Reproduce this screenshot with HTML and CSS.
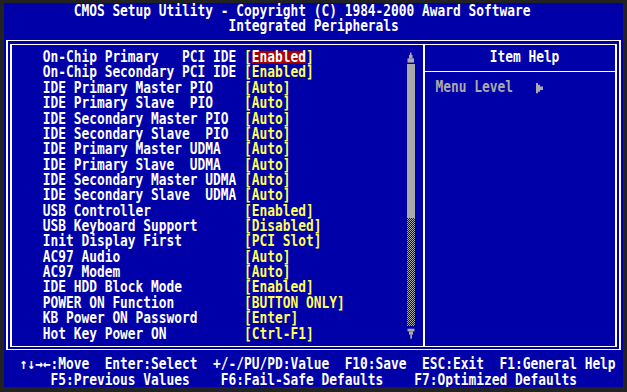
FILE: index.html
```html
<!DOCTYPE html>
<html lang="en">
<head>
  <meta charset="UTF-8">
  <title>CMOS Setup Utility - Integrated Peripherals</title>
  <link rel="stylesheet" href="styles.css">
</head>
<body>

  <div class="screen">

    <!-- Title lines -->
    <header class="title">
      <div class="ln title-main">CMOS Setup Utility - Copyright (C) 1984-2000 Award Software</div>
      <div class="ln title-sub">Integrated Peripherals</div>
    </header>

    <!-- Double framed setup area -->
    <main class="frame">
      <div class="outer">
        <div class="inner">

          <section class="list">
            <div class="rows">
              <div class="ln"><span class="lbl">On-Chip Primary   PCI IDE</span><span class="val">[<b class="sel">Enabled</b>]</span></div>
              <div class="ln"><span class="lbl">On-Chip Secondary PCI IDE</span><span class="val">[Enabled]</span></div>
              <div class="ln"><span class="lbl">IDE Primary Master PIO</span><span class="val">[Auto]</span></div>
              <div class="ln"><span class="lbl">IDE Primary Slave  PIO</span><span class="val">[Auto]</span></div>
              <div class="ln"><span class="lbl">IDE Secondary Master PIO</span><span class="val">[Auto]</span></div>
              <div class="ln"><span class="lbl">IDE Secondary Slave  PIO</span><span class="val">[Auto]</span></div>
              <div class="ln"><span class="lbl">IDE Primary Master UDMA</span><span class="val">[Auto]</span></div>
              <div class="ln"><span class="lbl">IDE Primary Slave  UDMA</span><span class="val">[Auto]</span></div>
              <div class="ln"><span class="lbl">IDE Secondary Master UDMA</span><span class="val">[Auto]</span></div>
              <div class="ln"><span class="lbl">IDE Secondary Slave  UDMA</span><span class="val">[Auto]</span></div>
              <div class="ln"><span class="lbl">USB Controller</span><span class="val">[Enabled]</span></div>
              <div class="ln"><span class="lbl">USB Keyboard Support</span><span class="val">[Disabled]</span></div>
              <div class="ln"><span class="lbl">Init Display First</span><span class="val">[PCI Slot]</span></div>
              <div class="ln"><span class="lbl">AC97 Audio</span><span class="val">[Auto]</span></div>
              <div class="ln"><span class="lbl">AC97 Modem</span><span class="val">[Auto]</span></div>
              <div class="ln"><span class="lbl">IDE HDD Block Mode</span><span class="val">[Enabled]</span></div>
              <div class="ln"><span class="lbl">POWER ON Function</span><span class="val">[BUTTON ONLY]</span></div>
              <div class="ln"><span class="lbl">KB Power ON Password</span><span class="val">[Enter]</span></div>
              <div class="ln"><span class="lbl">Hot Key Power ON</span><span class="val">[Ctrl-F1]</span></div>
            </div>

            <!-- Scroll bar -->
            <div class="scroll">
              <svg class="arrow" viewBox="0 0 8 15.36" width="8" height="15.36">
                <rect x="3" y="3.6" width="1.5" height="2.4" fill="#aaa"/>
                <rect x="2" y="6" width="3.5" height="3.3" fill="#aaa"/>
                <rect x="0.5" y="9.3" width="6.5" height="4.3" fill="#aaa"/>
              </svg>
              <div class="thumb"></div>
              <div class="track"></div>
              <svg class="arrow" viewBox="0 0 8 15.36" width="8" height="15.36">
                <rect x="0.5" y="2.7" width="7" height="2.7" fill="#aaa"/>
                <rect x="2" y="5.4" width="4" height="3.3" fill="#aaa"/>
                <rect x="3.3" y="8.7" width="1.7" height="4" fill="#aaa"/>
              </svg>
            </div>
          </section>

          <aside class="help">
            <div class="help-head">
              <div class="ln">Item Help</div>
            </div>
            <div class="help-body">
              <div class="ln menu">Menu Level   <svg class="pointer" viewBox="0 0 7 9" width="7" height="9"><path d="M0 0h2v1.5h2v1.5h3v3h-3v1.5h-2v1.5h-2z" fill="#aaa"/></svg></div>
            </div>
          </aside>

        </div>
      </div>
    </main>

    <!-- Key hints -->
    <footer class="keys">
      <div class="ln keys-top">&#8593;&#8595;&#8594;&#8592;:Move  Enter:Select  +/-/PU/PD:Value  F10:Save  ESC:Exit  F1:General Help</div>
      <div class="ln keys-bottom">F5:Previous Values    F6:Fail-Safe Defaults    F7:Optimized Defaults</div>
    </footer>

  </div>

</body>
</html>
```

FILE: styles.css
```css
body {
  margin: 0;
  padding: 3px 0 0 4px;
  background-color: #222;
}

/* 80 x 25 text screen, one row = 15.36px, one column = 1ch (7.74px) */
.screen {
  --rh: 15.36px;
  width: 80ch;
  height: 384px;
  display: flex;
  flex-direction: column;
  background-color: #0000a8;
  color: #fff;
  font-family: "DejaVu Sans Mono", "Liberation Mono", monospace;
  font-weight: bold;
  font-size: 12.86px;
}

.ln {
  height: var(--rh);
  line-height: var(--rh);
  white-space: pre;
  transform: translateY(0.7px) scaleY(1.17); /* tall VGA glyphs */
}

.title,
.keys {
  height: calc(var(--rh) * 2);
  flex: none;
}

.title-main {
  padding-left: 9ch;
}

.title-sub {
  padding-left: 29ch;
}

.keys-top {
  padding-left: 2ch;
}

.keys-bottom {
  padding-left: 6ch;
}

/* double frame: two nested single lines */
.frame {
  flex: 1;
  padding-top: 6.28px;
}

.outer {
  margin: 0 2px;
  padding: 3px 2px 2px;
  border-style: solid;
  border-color: #fff;
  border-width: 1px 2px;
}

.inner {
  height: 301px;
  display: flex;
  border-style: solid;
  border-color: #fff;
  border-width: 1px 2px;
}

/* list of settings */
.list {
  width: 413px;
  box-sizing: border-box;
  padding: 4.08px 0 0 30.71px;
  display: flex;
  border-right: 2px solid #fff;
}

.rows {
  width: 47ch;
  flex: none;
}

.lbl {
  display: inline-block;
  width: 26ch;
}

.val {
  color: #ffff55;
}

.sel {
  display: inline-block;
  height: 11px;
  line-height: 11px;
  background-color: #a80000;
  color: #fff;
}

.scroll {
  width: 8px;
  flex: none;
  display: flex;
  flex-direction: column;
}

.arrow {
  display: block;
}

.thumb {
  height: calc(var(--rh) * 10);
  background-color: #aaa;
}

.track {
  height: calc(var(--rh) * 7);
  background: repeating-conic-gradient(#aaa 0 25%, #0000a8 0 50%) 0 0 / 2px 2px;
}

/* item help panel */
.help {
  flex: 1;
}

.help-head {
  height: 27px;
  box-sizing: border-box;
  padding: 4.08px 0 0 64.7px;
  border-bottom: 1px solid #fff;
}

.help-body {
  padding: 6.8px 0 0 10.55px;
}

.menu {
  color: #aaa;
}

.pointer {
  vertical-align: -1px;
}
```
